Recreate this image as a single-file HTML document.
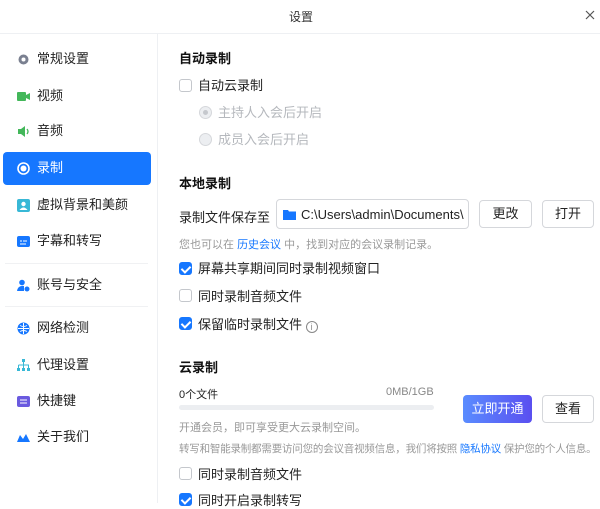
<!DOCTYPE html>
<html><head><meta charset="utf-8"><style>
*{margin:0;padding:0;box-sizing:border-box}
body{width:600px;height:503px;overflow:hidden;background:#fff;font-family:"Liberation Sans","Noto Sans CJK SC",sans-serif;color:#222;font-size:13px;position:relative}
.a{position:absolute;white-space:nowrap}
.hdr{position:absolute;left:0;top:0;width:600px;height:34px;border-bottom:1px solid #eef0f3}
.side{position:absolute;left:0;top:34px;width:158px;height:469px;border-right:1px solid #eef0f3}
.it{position:absolute;left:37px;font-size:13px;color:#222;line-height:16px}
.ic{position:absolute;left:17px;width:13px;height:13px}
.sel{position:absolute;left:3px;top:152px;width:148px;height:33px;background:#1677ff;border-radius:4px}
.div{position:absolute;left:5px;width:143px;height:1px;background:#f0f1f3}
h3{position:absolute;left:179px;font-size:13px;font-weight:bold;color:#111;line-height:16px}
.cb{position:absolute;left:179px;width:13px;height:13px;border:1px solid #c4c7cc;border-radius:3px;background:#fff}
.cb.on{background:#1677ff;border-color:#1677ff}
.cb.on:after{content:"";position:absolute;left:3px;top:1px;width:4px;height:7px;border:solid #fff;border-width:0 2px 2px 0;transform:rotate(45deg)}
.lb{position:absolute;left:198px;font-size:13px;line-height:16px}
.rd{position:absolute;left:199px;width:13px;height:13px;border-radius:50%;border:1px solid #d5d7db;background:#eceef1}
.gray{color:#999;font-size:11px}
.btn{position:absolute;height:28px;border:1px solid #d5d7db;border-radius:4px;background:#fff;font-size:13px;text-align:center;line-height:26px}
</style></head><body>
<div class="hdr"><div class="a" style="left:289px;top:8px;font-size:12px;color:#333">设置</div>
<svg class="a" style="left:585px;top:10px" width="10" height="10" viewBox="0 0 10 10"><path d="M1 1l8 8M9 1l-8 8" stroke="#555" stroke-width="1.2"/></svg></div>
<div class="side"></div>
<div class="sel"></div>
<svg class="ic" style="top:53px" viewBox="0 0 13 13"><circle cx="6.5" cy="6.5" r="5" fill="#7a8090"/><circle cx="6.5" cy="6.5" r="2" fill="#fff"/></svg><div class="it" style="top:51px">常规设置</div>
<svg class="ic" style="top:90px" viewBox="0 0 13 13"><rect x="0" y="2" width="9" height="9" rx="1" fill="#43b75a"/><path d="M9 5l4-2v7l-4-2z" fill="#43b75a"/></svg><div class="it" style="top:88px">视频</div>
<svg class="ic" style="top:125px" viewBox="0 0 13 13"><path d="M1 4h3l4-3v11l-4-3H1z" fill="#43b75a"/><path d="M10 4q2 2.5 0 5" stroke="#43b75a" fill="none" stroke-width="1.3"/></svg><div class="it" style="top:123px">音频</div>
<svg class="ic" style="top:162px" viewBox="0 0 13 13"><circle cx="6.5" cy="6.5" r="5.5" fill="none" stroke="#fff" stroke-width="1.6"/><circle cx="6.5" cy="6.5" r="3" fill="#fff"/></svg><div class="it" style="top:160px;color:#fff">录制</div>
<svg class="ic" style="top:199px" viewBox="0 0 13 13"><rect width="13" height="13" rx="2" fill="#38b8d6"/><circle cx="6.5" cy="5" r="2.2" fill="#fff"/><path d="M2.5 11q4-5 8 0z" fill="#fff"/></svg><div class="it" style="top:197px">虚拟背景和美颜</div>
<svg class="ic" style="top:235px" viewBox="0 0 13 13"><rect y="1" width="13" height="11" rx="2" fill="#1677ff"/><path d="M3 6h2M6 6h4M3 9h6" stroke="#fff"/></svg><div class="it" style="top:233px">字幕和转写</div>
<div class="div" style="top:263px"></div>
<svg class="ic" style="top:279px" viewBox="0 0 13 13"><circle cx="5" cy="3.5" r="2.8" fill="#1677ff"/><path d="M0 12q1-6 7-5v5z" fill="#1677ff"/><circle cx="10" cy="10" r="2.5" fill="#1677ff"/></svg><div class="it" style="top:277px">账号与安全</div>
<div class="div" style="top:306px"></div>
<svg class="ic" style="top:322px" viewBox="0 0 13 13"><circle cx="6.5" cy="6.5" r="6" fill="#1677ff"/><path d="M1 6.5h11M6.5 1v11M3 3.5q3.5 2 7 0M3 9.5q3.5-2 7 0" stroke="#fff" fill="none"/></svg><div class="it" style="top:320px">网络检测</div>
<svg class="ic" style="top:359px" viewBox="0 0 13 13"><rect x="5" y="0" width="3" height="3" fill="#38b8d6"/><path d="M6.5 3v3M1.5 6h10v3M6.5 6v3M1.5 6v3" stroke="#38b8d6" fill="none"/><rect x="0" y="9" width="3" height="3" fill="#38b8d6"/><rect x="5" y="9" width="3" height="3" fill="#38b8d6"/><rect x="10" y="9" width="3" height="3" fill="#38b8d6"/></svg><div class="it" style="top:357px">代理设置</div>
<svg class="ic" style="top:395px" viewBox="0 0 13 13"><rect y="1" width="13" height="11" rx="2" fill="#6a5adf"/><path d="M3 5h7M3 8h7" stroke="#fff"/></svg><div class="it" style="top:393px">快捷键</div>
<svg class="ic" style="top:431px" viewBox="0 0 13 13"><path d="M0 11l3-7 3 4 3-5 4 8z" fill="#1677ff"/></svg><div class="it" style="top:429px">关于我们</div>

<h3 style="top:51px">自动录制</h3>
<div class="cb" style="top:79px"></div><div class="lb" style="top:78px">自动云录制</div>
<div class="rd" style="top:106px"><div style="position:absolute;left:3px;top:3px;width:5px;height:5px;border-radius:50%;background:#c5c8cd"></div></div><div class="lb" style="left:218px;top:105px;color:#b5b8bd">主持人入会后开启</div>
<div class="rd" style="top:133px"></div><div class="lb" style="left:218px;top:132px;color:#b5b8bd">成员入会后开启</div>

<h3 style="top:176px">本地录制</h3>
<div class="a" style="left:179px;top:207px">录制文件保存至</div>
<div class="a" style="left:276px;top:199px;width:193px;height:30px;border:1px solid #d5d7db;border-radius:4px;overflow:hidden">
<svg style="position:absolute;left:6px;top:9px" width="13" height="11" viewBox="0 0 13 11"><path d="M0 1h5l1 1.5h7V11H0z" fill="#1677ff"/></svg>
<div class="a" style="left:24px;top:7px;font-size:13px">C:\Users\admin\Documents\</div></div>
<div class="btn" style="left:479px;top:200px;width:53px">更改</div>
<div class="btn" style="left:542px;top:200px;width:52px">打开</div>
<div class="a gray" style="left:179px;top:236px">您也可以在 <span style="color:#1677ff">历史会议</span> 中，找到对应的会议录制记录。</div>
<div class="cb on" style="top:262px"></div><div class="lb" style="top:261px">屏幕共享期间同时录制视频窗口</div>
<div class="cb" style="top:289px"></div><div class="lb" style="top:289px">同时录制音频文件</div>
<div class="cb on" style="top:317px"></div><div class="lb" style="top:317px">保留临时录制文件 <span style="display:inline-block;width:12px;height:12px;border:1px solid #888;border-radius:50%;font-size:9px;line-height:10px;text-align:center;color:#888;vertical-align:-1px">i</span></div>

<h3 style="top:360px">云录制</h3>
<div class="a" style="left:179px;top:386px;font-size:11px">0个文件</div>
<div class="a" style="left:386px;top:386px;font-size:11px;color:#888">0MB/1GB</div>
<div class="a" style="left:179px;top:405px;width:255px;height:5px;border-radius:3px;background:#eceef1"></div>
<div class="a gray" style="left:179px;top:419px">开通会员，即可享受更大云录制空间。</div>
<div class="a" style="left:463px;top:395px;width:69px;height:28px;border-radius:4px;background:linear-gradient(90deg,#5a8cff,#5a4ff0);color:#fff;text-align:center;line-height:28px">立即开通</div>
<div class="btn" style="left:542px;top:395px;width:52px">查看</div>
<div class="a gray" style="left:179px;top:441px;font-size:10.5px;letter-spacing:-0.2px">转写和智能录制都需要访问您的会议音视频信息，我们将按照 <span style="color:#1677ff">隐私协议</span> 保护您的个人信息。</div>
<div class="cb" style="top:467px"></div><div class="lb" style="top:467px">同时录制音频文件</div>
<div class="cb on" style="top:493px"></div><div class="lb" style="top:493px">同时开启录制转写</div>
</body></html>
